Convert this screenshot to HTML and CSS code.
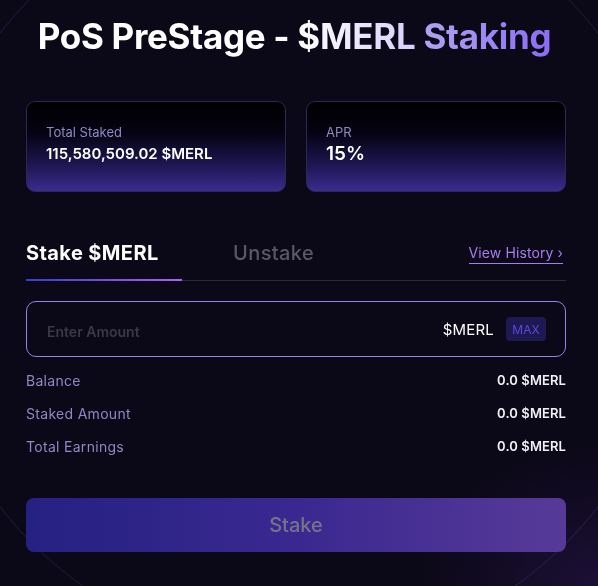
FILE: index.html
```html
<!DOCTYPE html>
<html>
<head>
<meta charset="utf-8">
<link rel="stylesheet" href="styles.css">
</head>
<body>
<div class="backdrop"><div class="bg-ring"></div></div>
<main class="page">
  <h1 class="title">PoS PreStage - <span class="merl">$MERL</span> <span class="staking">Staking</span></h1>
  <section class="cards">
    <div class="card">
      <div class="card-label">Total Staked</div>
      <div class="card-value">115,580,509.02 $MERL</div>
    </div>
    <div class="card">
      <div class="card-label">APR</div>
      <div class="card-value big">15%</div>
    </div>
  </section>
  <nav class="tabs">
    <div class="tab active">Stake $MERL</div>
    <div class="tab">Unstake</div>
    <a class="history">View History ›</a>
  </nav>
  <div class="tabline"><div class="tabline-active"></div></div>
  <div class="input">
    <span class="placeholder">Enter Amount</span>
    <span class="unit">$MERL</span>
    <span class="max">MAX</span>
  </div>
  <div class="rows">
    <div class="row"><span class="row-label">Balance</span><span class="row-value">0.0 $MERL</span></div>
    <div class="row"><span class="row-label">Staked Amount</span><span class="row-value">0.0 $MERL</span></div>
    <div class="row"><span class="row-label">Total Earnings</span><span class="row-value">0.0 $MERL</span></div>
  </div>
  <button class="stake-btn">Stake</button>
</main>
</body>
</html>
```
FILE: styles.css
```css
* { box-sizing: border-box; }
html, body { margin: 0; padding: 0; overflow: hidden; }
body {
  width: 598px;
  height: 586px;
  background: radial-gradient(ellipse 260px 200px at 100% 100%, rgba(60,30,110,0.35), transparent 70%), #0b0817;
  font-family: Inter, "Noto Sans", sans-serif;
  color: #fff;
}
.backdrop {
  position: fixed;
  inset: 0;
  overflow: hidden;
  pointer-events: none;
}
.bg-ring {
  position: absolute;
  left: -81px;
  top: -115px;
  width: 760px;
  height: 770px;
  border-radius: 50%;
  border: 1px solid rgba(110, 90, 190, 0.2);
}
.page {
  position: relative;
  padding: 0 32px 0 26px;
  display: flex;
  flex-direction: column;
}
.title {
  margin: 14px 0 0;
  text-align: center;
  font-size: 35px;
  font-weight: 700;
  letter-spacing: -0.3px;
  line-height: 44px;
  padding-right: 3px;
}
.merl {
  background: linear-gradient(90deg, #ffffff, #d8d0fb);
  -webkit-background-clip: text;
  background-clip: text;
  color: transparent;
}
.staking {
  background: linear-gradient(90deg, #b0a4f2, #8a6cf6);
  -webkit-background-clip: text;
  background-clip: text;
  color: transparent;
}
.cards {
  margin-top: 43px;
  display: grid;
  grid-template-columns: 1fr 1fr;
  gap: 20px;
}
.card {
  height: 91px;
  border-radius: 9px;
  border: 1px solid #2d2850;
  background: linear-gradient(180deg, #000000 0%, #050313 35%, #1d1650 70%, #3a2b90 100%);
  padding: 22px 19px 0;
}
.card-label {
  font-size: 13px;
  color: #8f88c4;
  line-height: 17px;
}
.card-value {
  margin-top: 3px;
  font-size: 15px;
  font-weight: 600;
  letter-spacing: 0;
  line-height: 19px;
}
.card-value.big {
  font-size: 19px;
  margin-top: 2px;
  line-height: 22px;
}
.tabs {
  margin-top: 48px;
  display: flex;
  align-items: center;
  height: 26px;
}
.tab {
  font-size: 20px;
  letter-spacing: 0.4px;
  color: #5a5868;
  font-weight: 500;
}
.tab.active {
  color: #fff;
  font-weight: 700;
  width: 207px;
}
.history {
  margin-left: auto;
  margin-right: 3px;
  font-size: 14px;
  color: #a77cf0;
  border-bottom: 1px solid #a77cf0;
  line-height: 18px;
  padding-bottom: 1px;
  margin-top: 2px;
  letter-spacing: 0.1px;
}
.tabline {
  margin-top: 14px;
  height: 1px;
  background: #2c2940;
  position: relative;
}
.tabline-active {
  position: absolute;
  left: 0;
  top: -1px;
  width: 156px;
  height: 2px;
  background: linear-gradient(90deg, #3b3bcf, #a565f3);
}
.input {
  margin-top: 20px;
  height: 56px;
  border: 1px solid #8e86e8;
  border-radius: 10px;
  display: flex;
  align-items: center;
  padding: 0 19px 0 20px;
}
.placeholder {
  font-size: 14px;
  font-weight: 600;
  color: #3b3948;
  flex: 1;
  padding-top: 4px;
}
.unit {
  font-size: 15px;
  letter-spacing: 0.2px;
  color: #fff;
}
.max {
  margin-left: 12px;
  width: 40px;
  height: 24px;
  border-radius: 4px;
  background: #1e1950;
  color: #5b48dc;
  font-size: 12px;
  display: flex;
  align-items: center;
  justify-content: center;
}
.rows {
  margin-top: 14px;
  display: flex;
  flex-direction: column;
  gap: 15px;
}
.row {
  display: flex;
  justify-content: space-between;
  align-items: center;
  height: 18px;
}
.row-label {
  font-size: 14px;
  color: #8f88c4;
  letter-spacing: 0.3px;
}
.row-value {
  font-size: 13px;
  font-weight: 600;
  letter-spacing: 0.1px;
  color: #f1f0f6;
}
.stake-btn {
  margin-top: 43px;
  height: 54px;
  border: none;
  border-radius: 8px;
  background: linear-gradient(90deg, #252182 0%, #3a2890 50%, #573a98 100%);
  color: #75748a;
  font-family: inherit;
  font-size: 20px;
  font-weight: 500;
  letter-spacing: 0;
}
```
